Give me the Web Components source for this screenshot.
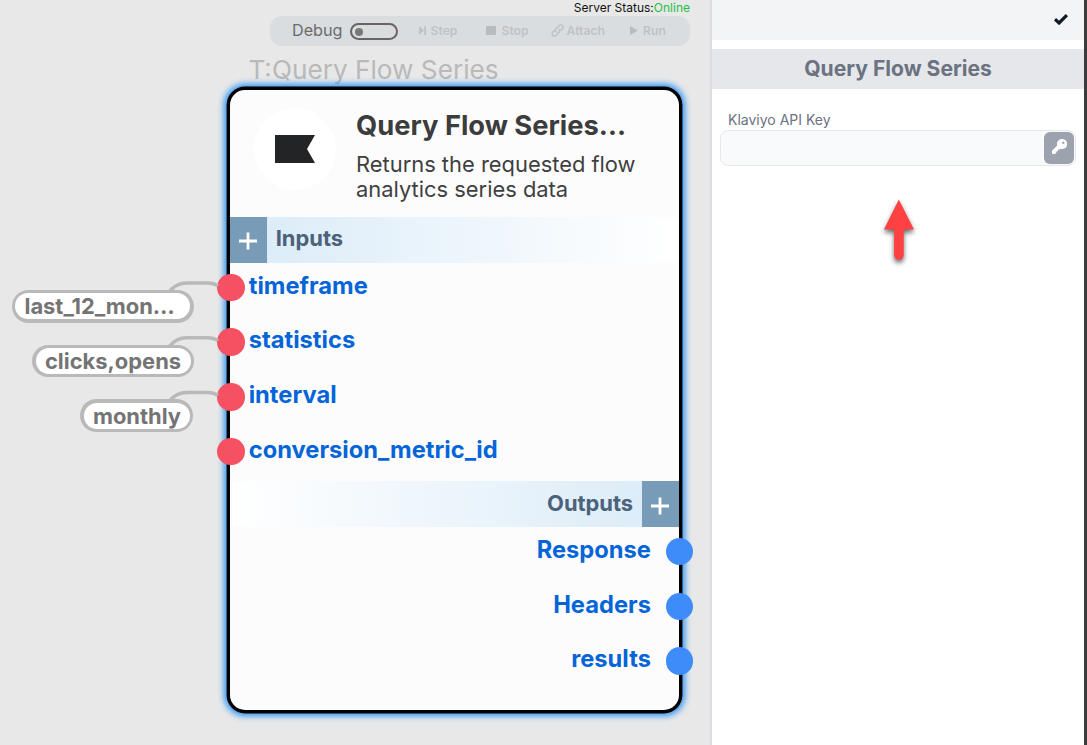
<!DOCTYPE html>
<html lang="en">
<head>
<meta charset="utf-8">
<title>Query Flow Series</title>
<style>
html,body{margin:0;height:100%;overflow:hidden}
body{font-family:Inter,"Liberation Sans",sans-serif;background:#e8e8e8}
</style>
</head>
<body>
<flow-app></flow-app>
<script>
const define = (name, html) => {
  const t = document.createElement('template');
  t.innerHTML = html;
  customElements.define(name, class extends HTMLElement {
    constructor() {
      super();
      this.attachShadow({ mode: 'open' }).append(t.content.cloneNode(true));
    }
  });
};

define('tool-button', `<style>
:host{display:flex;align-items:center;font-size:12.2px;font-weight:600;color:#c1c2c3;line-height:16px;white-space:nowrap}
::slotted(svg){display:block;flex:none;margin:-2px 5px 0 0}
</style><slot name="icon"></slot><slot></slot>`);

define('debug-bar', `<style>
:host{display:block;width:420px}
.status{height:16px;line-height:16px;font-size:12px;color:#111;text-align:right}
.status b{font-weight:400;color:#1fc04a}
.bar{box-sizing:border-box;height:30px;border-radius:12px;background:#d9dde0;display:flex;align-items:center;padding-left:22px}
.debug{font-size:16.2px;color:#6b6b6b;line-height:28px;margin-bottom:2px}
.switch{box-sizing:border-box;width:48px;height:17px;border:2px solid #6b6464;border-radius:9px;margin:1px 0 0 7px;padding:2.5px 3px}
.switch i{display:block;width:8px;height:8px;border-radius:50%;background:#7b7878}
</style>
<div class="status">Server Status:<b>Online</b></div>
<div class="bar"><span class="debug">Debug</span><span class="switch"><i></i></span>
<tool-button style="margin-left:21px"><svg slot="icon" width="7" height="9" viewBox="0 0 7 9"><path d="M0 0L5 4.5L0 9ZM5.2 0H7V9H5.2Z" fill="#c1c2c3"/></svg>Step</tool-button>
<tool-button style="margin-left:29px"><svg slot="icon" width="10" height="9" viewBox="0 0 10 9"><rect width="10" height="9" fill="#b9bbbc"/></svg>Stop</tool-button>
<tool-button style="margin-left:22px"><svg slot="icon" style="margin-right:3px" width="13" height="13" viewBox="0 0 13 13" fill="none" stroke="#bfc0c1" stroke-width="1.4" stroke-linecap="round"><path d="M5.2 7.8C4.2 6.8 4.2 5.5 5.1 4.6L8 1.8C9 .8 10.5.8 11.3 1.6C12.2 2.5 12.2 3.9 11.2 4.9L9.8 6.3"/><path d="M7.8 5.2C8.8 6.2 8.8 7.5 7.9 8.4L5 11.2C4 12.2 2.5 12.2 1.7 11.4C.8 10.5.8 9.1 1.8 8.1L3.2 6.7"/></svg>Attach</tool-button>
<tool-button style="margin-left:25px"><svg slot="icon" width="8" height="9" viewBox="0 0 8 9"><path d="M0 0L8 4.5L0 9Z" fill="#b9bbbc"/></svg>Run</tool-button>
</div>`);

define('value-pill', `<style>
:host{box-sizing:border-box;display:flex;position:absolute;height:32.8px;border-radius:17px;background:#b9b9b9;padding:3.4px;color:#747474;font-size:21.9px;font-weight:700;line-height:26px;white-space:nowrap}
div{flex:1;border-radius:14px;background:#fff;padding-left:9.4px}
</style><div><slot></slot></div>`);

define('flow-port', `<style>
:host{display:flex;height:54.67px;align-items:flex-start;font-size:23.7px;font-weight:700;color:#0565d8;line-height:46px;white-space:nowrap}
i{flex:none;width:27.6px;height:27.6px;border-radius:50%;background:#f55163;margin:10.9px 4px 0 -12.9px}
:host([out]){flex-direction:row-reverse}
:host([out]) i{background:#3e8bfa;margin:10.9px -14.3px 0 14.6px}
</style><i></i><slot></slot>`);

define('flow-section', `<style>
:host{display:flex;height:45.6px;align-items:stretch;background:linear-gradient(90deg,#d9ebf8,#fff);color:#4b627a;font-size:21.9px;font-weight:700;line-height:43px}
.add{flex:none;width:36.7px;background:#789cb7;display:flex;align-items:center;justify-content:center;margin-right:9px}
svg{display:block;margin-top:3px}
:host([out]){flex-direction:row-reverse;background:linear-gradient(270deg,#d9ebf8,#fff)}
:host([out]) .add{margin:0 0 0 9px}
</style><div class="add"><svg width="18" height="18" viewBox="0 0 18 18"><path d="M0 9H18M9 .5V17.5" stroke="#fff" stroke-width="2.8"/></svg></div><slot></slot>`);

define('flow-node', `<style>
:host{display:flex;flex-direction:column;position:absolute;left:230px;top:89.7px;width:448.8px;height:619.9px;border-radius:15px;background:#fcfcfc;box-shadow:0 0 0 3.4px #000,0 0 6px 5.9px #2d94f4}
header{height:127.5px;display:flex;flex:none}
.logo{width:82px;height:82px;border-radius:50%;background:#fff;margin:18.3px 20px 0 24px;display:flex;align-items:center;justify-content:center}
.logo svg{display:block}
h2{margin:19.3px 0 0;font-size:27.3px;line-height:34px;font-weight:700;color:#3c3c3c;white-space:nowrap}
p{margin:9px 0 0;font-size:21.9px;line-height:25px;color:#3f3f3f;white-space:nowrap}
flow-section[out]{line-height:44px}
</style>
<header><div class="logo"><svg width="40" height="28" viewBox="0 0 40 28"><path d="M0 0H40L32 14L40 28H0Z" fill="#232426"/></svg></div>
<div><h2>Query Flow Series…</h2><p>Returns the requested flow<br>analytics series data</p></div></header>
<flow-section>Inputs</flow-section>
<flow-port>timeframe</flow-port><flow-port>statistics</flow-port><flow-port>interval</flow-port><flow-port>conversion_metric_id</flow-port>
<flow-section out>Outputs</flow-section>
<flow-port out>Response</flow-port><flow-port out>Headers</flow-port><flow-port out>results</flow-port>`);

define('flow-canvas', `<style>
:host{display:block;position:relative;background:#e8e8e8;overflow:hidden}
debug-bar{margin-left:270px}
.name{position:absolute;left:248.5px;top:53px;font-size:26.2px;line-height:34px;color:#b9b9b9;white-space:nowrap}
.wires{position:absolute;left:0;top:0}
</style>
<debug-bar></debug-bar>
<div class="name">T:Query Flow Series</div>
<flow-node></flow-node>
<svg class="wires" width="230" height="480" fill="none" stroke="#b9b9b9" stroke-width="3.5"><path d="M169 292Q176 283 187 283H207Q214 283 218 286"/><path d="M169 346.7Q176 337.7 187 337.7H207Q214 337.7 218 340.7"/><path d="M169 401.4Q176 392.4 187 392.4H207Q214 392.4 218 395.4"/></svg>
<value-pill style="left:11.7px;top:290px;width:182px;line-height:27px">last_12_mon…</value-pill>
<value-pill style="left:32.2px;top:344.6px;width:162px">clicks,opens</value-pill>
<value-pill style="left:80.2px;top:399.3px;width:113px">monthly</value-pill>`);

define('key-field', `<style>
:host{display:block;padding:21px 8px 0}
label{display:block;padding-left:8px;font-size:14px;line-height:20px;color:#6b7280}
.box{box-sizing:border-box;height:36px;border:1px solid #e5e7eb;border-radius:8px;background:#f9fafb;display:flex;justify-content:flex-end;padding:1px}
.key{width:30px;height:32px;border-radius:6px;background:#9ca3af;display:flex;align-items:center;justify-content:center}
svg{display:block;margin-top:-3px}
</style><label><slot></slot></label><div class="box"><div class="key"><svg width="15" height="15" viewBox="0 0 15 15"><path fill="#fff" fill-rule="evenodd" d="M10 0A5 5 0 1 1 8.5 9.7L7.6 10.6H6V12.2H4.4V13.6L3 15H.8Q0 15 0 14.2V11.8L5.2 6.5A5 5 0 0 1 10 0ZM11.3 2.5A1.2 1.2 0 1 0 11.3 4.9A1.2 1.2 0 0 0 11.3 2.5Z"/></svg></div></div>`);

define('side-panel', `<style>
:host{box-sizing:border-box;display:flex;flex-direction:column;background:#fff;border-left:2px solid #dbdce1;border-right:3px solid #3b3b3b}
.top{height:40px;background:#f3f4f6;display:flex;justify-content:flex-end;padding-right:16px;box-sizing:border-box}
.top svg{display:block;margin-top:13.5px}
h3{margin:9px 0 0;height:40px;line-height:39px;text-align:center;background:#e5e7eb;color:#6b7280;font-size:21.1px;font-weight:700}
.arrow{display:block;margin:28px 0 0 166px}
</style>
<div class="top"><svg width="14" height="11" viewBox="0 0 14 11"><path d="M1 5.3L5.1 9L12.9 1.2" fill="none" stroke="#111827" stroke-width="3.2"/></svg></div>
<h3>Query Flow Series</h3>
<key-field>Klaviyo API Key</key-field>
<svg class="arrow" width="42" height="76" viewBox="0 0 42 76"><path d="M20.8 5.5L36 35.5H25.7V61A4.8 4.8 0 0 1 16.1 61V35.5H6Z" fill="#ff4141" style="filter:drop-shadow(0 3px 2.5px rgba(0,0,0,.6))"/></svg>`);

define('flow-app', `<style>
:host{display:grid;grid-template-columns:710px 377px;height:745px}
</style><flow-canvas></flow-canvas><side-panel></side-panel>`);
</script>
</body>
</html>
